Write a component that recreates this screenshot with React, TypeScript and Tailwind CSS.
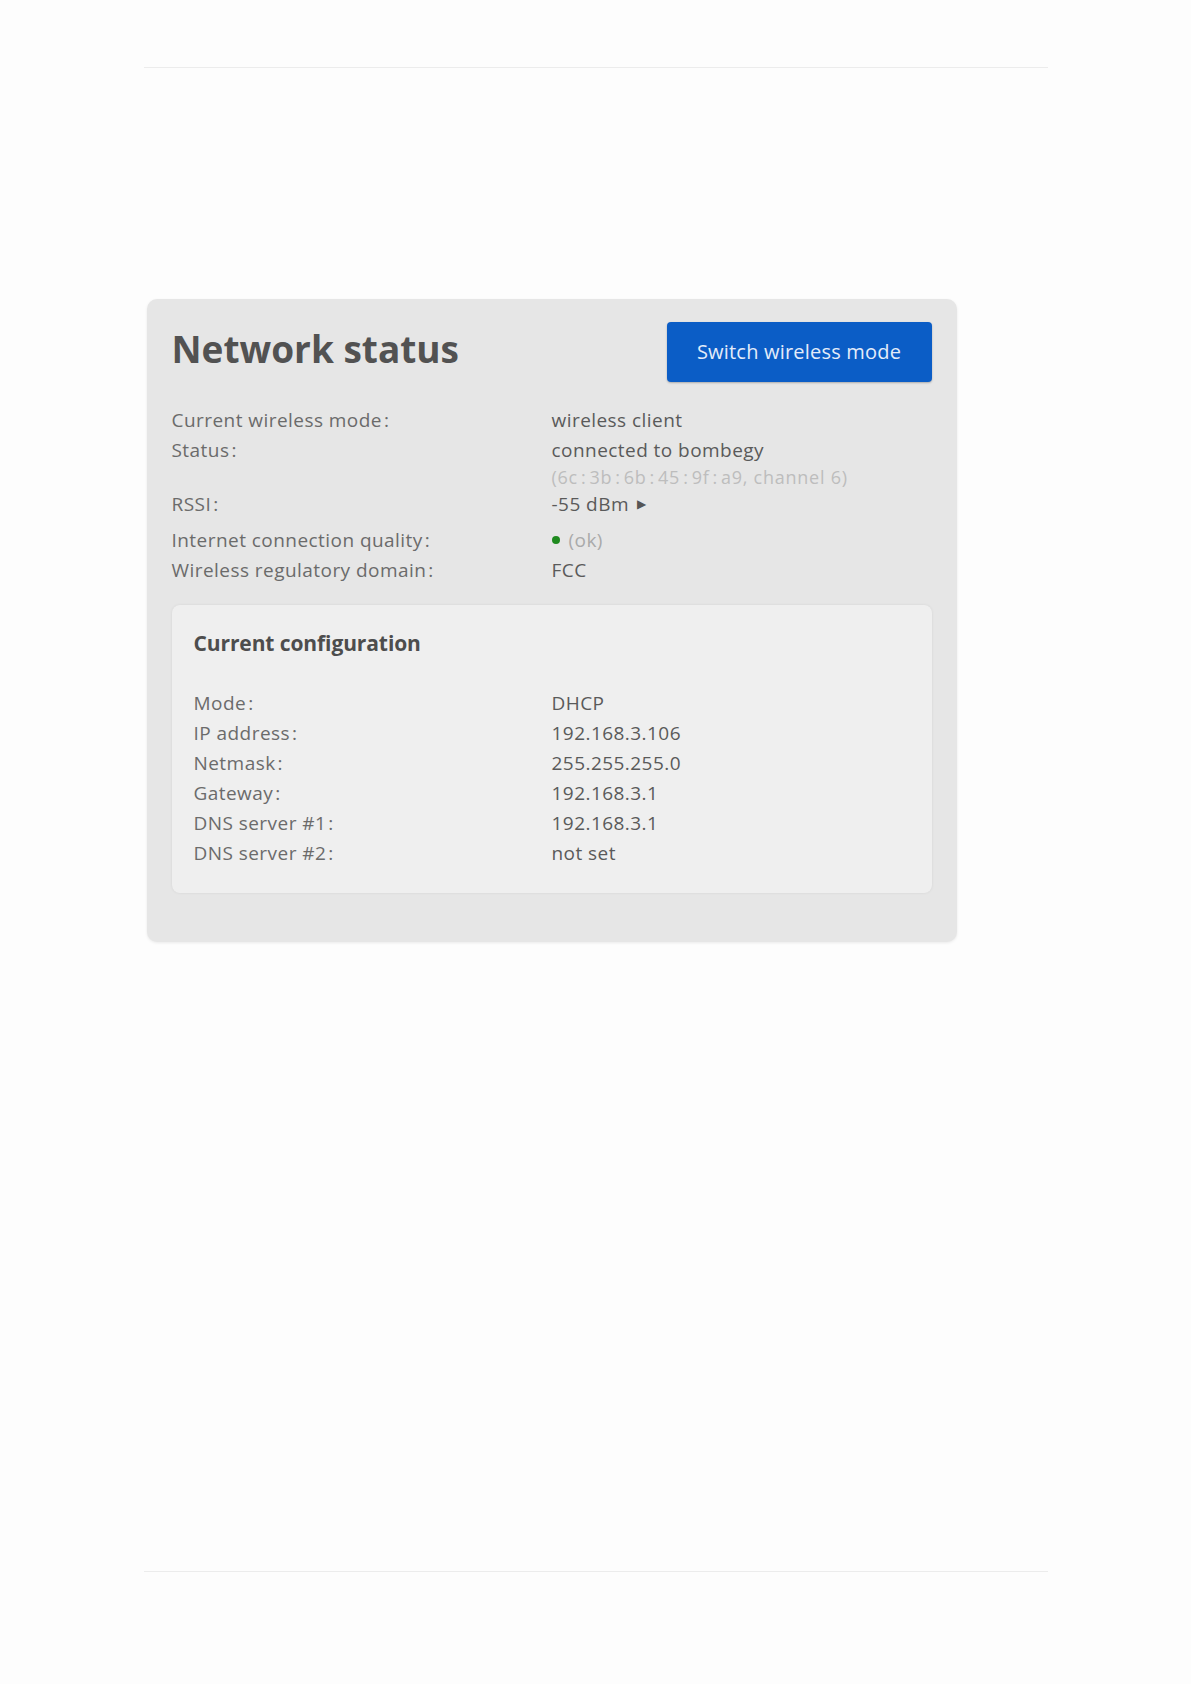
import { ReactNode } from 'react';

type Row = { label: string; value: ReactNode };

const mac = ['6c', '3b', '6b', '45', '9f', 'a9'];

const statusRows: Row[] = [
  { label: 'Current wireless mode:', value: 'wireless client' },
  {
    label: 'Status:',
    value: (
      <div>
        <div>connected to bombegy</div>
        <div className="text-[18px] leading-[24px] tracking-[0.75px] text-[#bdbdbd]">
          (
          {mac.map((m, i) => (
            <span key={i}>
              {m}
              {i < mac.length - 1 && <span className="mx-[3px]">:</span>}
            </span>
          ))}
          , channel 6)
        </div>
      </div>
    ),
  },
  {
    label: 'RSSI:',
    value: (
      <span className="flex items-center gap-[8px]">
        -55 dBm <span className="text-[12px] text-[#555]">▶</span>
      </span>
    ),
  },
  {
    label: 'Internet connection quality:',
    value: (
      <span className="flex items-center gap-[9px]">
        <span className="inline-block h-[8px] w-[8px] rounded-full bg-[#1f8a1f]" />
        <span className="text-[#aaaaaa]">(ok)</span>
      </span>
    ),
  },
  { label: 'Wireless regulatory domain:', value: 'FCC' },
];

const configRows: Row[] = [
  { label: 'Mode:', value: 'DHCP' },
  { label: 'IP address:', value: '192.168.3.106' },
  { label: 'Netmask:', value: '255.255.255.0' },
  { label: 'Gateway:', value: '192.168.3.1' },
  { label: 'DNS server #1:', value: '192.168.3.1' },
  { label: 'DNS server #2:', value: 'not set' },
];

function InfoRow({ label, value, className = '' }: Row & { className?: string }) {
  return (
    <div className={`grid grid-cols-2 ${className}`}>
      <div className="text-[#6b6b6b]">
        {label.slice(0, -1)}
        <span className="ml-[2px]">:</span>
      </div>
      <div className="text-[#5a5a5a]">{value}</div>
    </div>
  );
}

export default function App() {
  return (
    <div
      className="min-h-[1684px] bg-[#fdfdfd] flex flex-col items-center"
      style={{ fontFamily: '"Open Sans", "Noto Sans", sans-serif' }}
    >
      <div className="w-[904px] flex flex-col">
        <header className="h-[68px] border-b border-[#ececec]" />

        <main className="h-[1503px] pt-[231px]">
          <section className="ml-[3px] w-[810px] rounded-[10px] bg-[#e6e6e6] px-[25px] pt-[23px] pb-[49px] shadow-[0_1px_3px_rgba(0,0,0,0.08)]">
            <div className="flex items-center justify-between">
              <h1 className="pb-[6px] text-[37px] font-bold leading-[46px] text-[#525252]">Network status</h1>
              <button className="h-[60px] w-[265px] rounded-[4px] bg-[#0b5dc6] text-[20px] tracking-[0.2px] text-[#e3ecfa] shadow-[0_1px_2px_rgba(0,0,0,0.25)]">
                Switch wireless mode
              </button>
            </div>

            <div className="mt-[23px] text-[19px] leading-[30px] tracking-[0.45px]">
              {statusRows.map((r, i) => (
                <InfoRow key={r.label} label={r.label} value={r.value} className={i === 2 ? 'pb-[6px]' : ''} />
              ))}
            </div>

            <div className="mt-[20px] rounded-[8px] bg-[#efefef] px-[22px] pt-[23px] pb-[25px] shadow-[0_0_3px_rgba(0,0,0,0.08)]">
              <h2 className="text-[21px] font-bold leading-[30px] text-[#4d4d4d] tracking-[-0.1px]">Current configuration</h2>
              <div className="mt-[30px] text-[19px] leading-[30px] tracking-[0.45px]">
                {configRows.map(r => (
                  <InfoRow key={r.label} label={r.label} value={r.value} />
                ))}
              </div>
            </div>
          </section>
        </main>

        <footer className="border-t border-[#ececec] h-[112px]" />
      </div>
    </div>
  );
}
